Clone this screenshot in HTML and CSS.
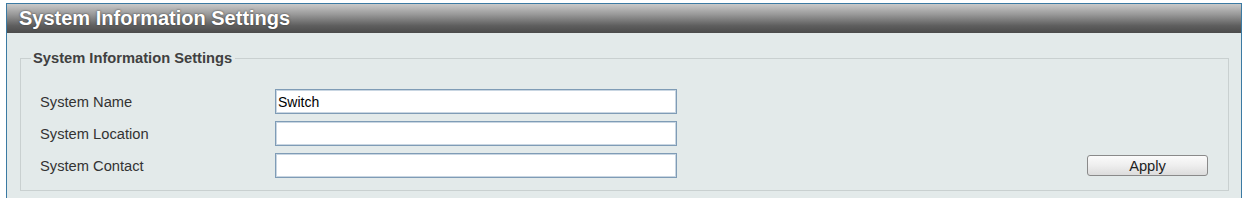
FILE: index.html
```html
<!DOCTYPE html>
<html lang="en">
<head>
<meta charset="UTF-8">
<title>System Information Settings</title>
<link rel="stylesheet" href="styles.css">
</head>
<body>

<div class="panel">
<div class="panel-title">System Information Settings</div>
<div class="panel-body">
<fieldset class="group">
<legend>System Information Settings</legend>
<div class="form-row">
<label for="sysName">System Name</label>
<input type="text" id="sysName" value="Switch">
</div>
<div class="form-row">
<label for="sysLocation">System Location</label>
<input type="text" id="sysLocation">
</div>
<div class="form-row">
<label for="sysContact">System Contact</label>
<input type="text" id="sysContact">
<button class="btn-apply">Apply</button>
</div>
</fieldset>
</div>
</div>

</body>
</html>
```

FILE: styles.css
```css
body {
margin: 0;
background: #ffffff;
font-family: "Liberation Sans", Arial, sans-serif;
color: #333333;
}

.panel {
margin: 3px 4px 0 6px;
border: 1px solid #3b7aa3;
border-bottom: none;
}

.panel-title {
height: 29px;
line-height: 28px;
padding-left: 12px;
font-size: 20px;
font-weight: bold;
color: #ffffff;
text-shadow: 0 0 2px #333333;
background: linear-gradient(to bottom, #c9c9c9 0%, #9a9a9a 35%, #5e5e5e 75%, #4b4b4b 100%);
}

.panel-body {
background: #e3eaea;
padding: 17px 12px 7px 13px;
}

.group {
margin: 0;
border: 1px solid #c9d0d0;
padding: 23px 20px 12px 10px;
}

.group legend {
padding: 0 3px 0 2px;
font-size: 14.7px;
font-weight: bold;
color: #404040;
}

.form-row {
display: flex;
align-items: center;
height: 25px;
margin: 0 0 7px 9px;
}

.form-row:last-child {
margin-bottom: 0;
}

.form-row label {
width: 235px;
font-size: 14.7px;
color: #333333;
}

.form-row input {
box-sizing: border-box;
width: 402px;
height: 25px;
margin: 0;
padding: 0 2px;
border: 1px solid #7f9cb6;
box-shadow: inset 0 0 0 1px #c9d6e2;
background: #ffffff;
font-family: "Liberation Sans", Arial, sans-serif;
font-size: 14px;
color: #000000;
}

.btn-apply {
margin-left: auto;
width: 121px;
height: 21px;
padding: 0;
border: 1px solid #8a8a8a;
border-radius: 3px;
background: linear-gradient(to bottom, #fbfbfb 0%, #eeeeee 50%, #dcdcdc 100%);
font-family: "Liberation Sans", Arial, sans-serif;
font-size: 14.7px;
color: #222222;
}
```
